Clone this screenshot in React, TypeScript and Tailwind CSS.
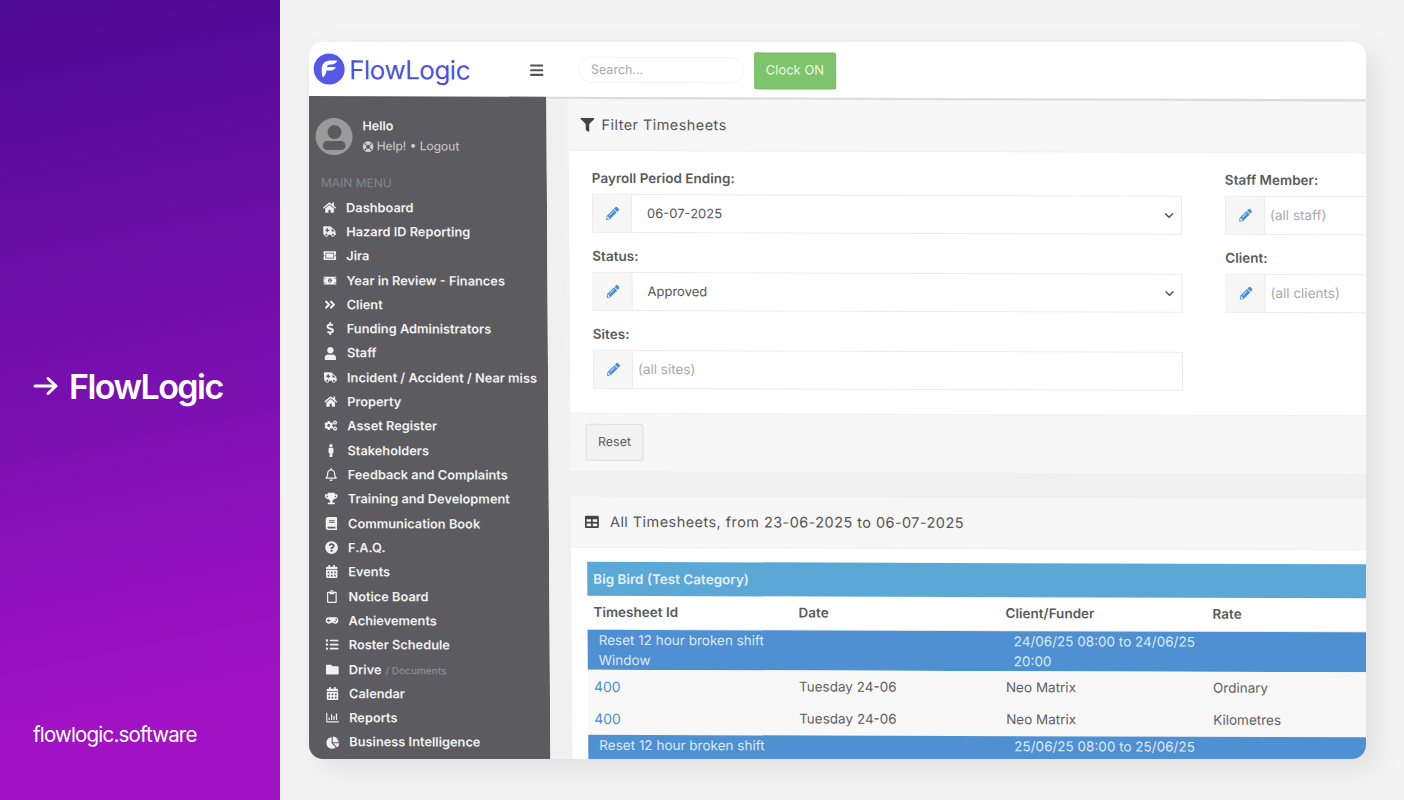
import {
  FaHome, FaAmbulance, FaTicketAlt, FaMoneyBillAlt, FaAngleDoubleRight, FaDollarSign, FaUser, FaCogs, FaMale,
  FaRegBell, FaTrophy, FaBook, FaQuestionCircle, FaCalendarAlt, FaRegClipboard, FaGamepad, FaListUl, FaFolder,
  FaRegChartBar, FaChartPie, FaBars, FaFilter, FaTable, FaPencilAlt, FaLifeRing, FaChevronDown,
} from "react-icons/fa";

const menu = [
  { label: "Dashboard", icon: FaHome },
  { label: "Hazard ID Reporting", icon: FaAmbulance },
  { label: "Jira", icon: FaTicketAlt },
  { label: "Year in Review - Finances", icon: FaMoneyBillAlt },
  { label: "Client", icon: FaAngleDoubleRight },
  { label: "Funding Administrators", icon: FaDollarSign },
  { label: "Staff", icon: FaUser },
  { label: "Incident / Accident / Near miss", icon: FaAmbulance },
  { label: "Property", icon: FaHome },
  { label: "Asset Register", icon: FaCogs },
  { label: "Stakeholders", icon: FaMale },
  { label: "Feedback and Complaints", icon: FaRegBell },
  { label: "Training and Development", icon: FaTrophy },
  { label: "Communication Book", icon: FaBook },
  { label: "F.A.Q.", icon: FaQuestionCircle },
  { label: "Events", icon: FaCalendarAlt },
  { label: "Notice Board", icon: FaRegClipboard },
  { label: "Achievements", icon: FaGamepad },
  { label: "Roster Schedule", icon: FaListUl },
  { label: "Drive", icon: FaFolder, sub: "/ Documents" },
  { label: "Calendar", icon: FaCalendarAlt },
  { label: "Reports", icon: FaRegChartBar },
  { label: "Business Intelligence", icon: FaChartPie },
];

const Field = ({ label, value, placeholder, select, width }: { label: string; value?: string; placeholder?: string; select?: boolean; width: string }) => (
  <div className={`${width} h-[78px]`}>
    <div className="h-[16px] leading-[16px] text-[13.5px] font-semibold text-[#5a5a5a]">{label}</div>
    <div className="mt-[8px] flex h-[39px] border border-[#ececec] bg-white">
      <div className="flex w-[39px] shrink-0 items-center justify-center border-r border-[#ececec] bg-[#f7f7f7]">
        <FaPencilAlt className="text-[13px] text-[#4a90d6]" />
      </div>
      {value ? (
        <div className="pl-[15px] flex items-center text-[13px] text-[#555]">{value}</div>
      ) : (
        <div className="pl-[5px] flex items-center text-[13.5px] text-[#aaa]">{placeholder}</div>
      )}
      {select && (
        <div className="ml-auto flex items-center pr-[3px]">
          <FaChevronDown className="mr-[4px] text-[10px] text-[#555]" />
        </div>
      )}
    </div>
  </div>
);

const BlueRow = ({ id, when, second, whenSecond }: { id: string; when: string; second?: string; whenSecond?: string }) => (
  <div className="grid grid-cols-[415px_1fr] bg-[#4f90d2] pl-[11px] text-[13.5px] leading-[20px] text-[#dbe9f7]">
    <div>
      <div>{id}</div>
      {second && <div>{second}</div>}
    </div>
    <div className="w-[200px]">
      <div className="whitespace-nowrap">{when}</div>
      {whenSecond && <div>{whenSecond}</div>}
    </div>
  </div>
);

const DataRow = ({ rate, h }: { rate: string; h: string }) => (
  <div className={`grid grid-cols-[205px_207px_207px_1fr] items-center pl-[6px] text-[13.5px] text-[#5f5f5f] ${h}`}>
    <div className="text-[14px] text-[#4a8fd0]">400</div>
    <div>Tuesday 24-06</div>
    <div>Neo Matrix</div>
    <div>{rate}</div>
  </div>
);

export default function App() {
  return (
    <div className="flex h-[800px] w-[1404px] overflow-hidden bg-[#f3f3f3] font-['Inter',sans-serif]">
      <aside className="flex w-[280px] shrink-0 flex-col bg-[linear-gradient(168deg,#4d0a94_0%,#7a10b0_50%,#a012c4_85%)] pl-[33px] text-white">
        <div className="mt-[366px] flex h-[40px] items-center">
          <svg width="26" height="20" viewBox="0 0 26 20" fill="none" stroke="white" strokeWidth="3" strokeLinecap="round" strokeLinejoin="round">
            <path d="M2 10h21M15 2.5 23 10l-8 7.500" />
          </svg>
          <span className="ml-[10px] text-[34px] font-semibold tracking-[-0.045em]">FlowLogic</span>
        </div>
        <div className="mt-[316px] text-[20.500px] leading-[26px] tracking-[-0.04em]">flowlogic.software</div>
      </aside>

      <main className="ml-[29px] mt-[42px] h-[717px] w-[1057px] overflow-hidden rounded-[14px] bg-white shadow-[10px_10px_28px_rgba(0,0,0,0.08)]">
        <div className="-ml-[8px] h-[760px] w-[1110px] origin-top-left [transform:matrix(1,0.003,0.0061,1,0,0)]">
          {/* top bar */}
          <header className="flex h-[54px] items-center bg-white pl-[12px]">
            <svg width="32" height="32" viewBox="0 0 32 32" className="shrink-0">
              <circle cx="16" cy="16" r="15.500" fill="#5558e6" />
              <path d="M8.500 17c0-6 3-9.500 9-9.500h6.500c-.5 2.500-2.500 3.800-5.500 3.800h-1.500c-2 0-3 1-3.300 2.700h8.800c-.5 2.300-2.500 3.500-5 3.500h-4.200c-.3 3-1.500 5.500-3.800 7-.6-2-1-4.500-1-7.500z" fill="white" />
            </svg>
            <span className="ml-[4px] text-[26px] tracking-[-0.02em] text-[#4d50e0]">FlowLogic</span>
            <FaBars className="ml-[59px] text-[15px] text-[#555]" />
            <div className="ml-[34px] flex h-[26px] w-[166px] items-center rounded-full border border-[#f4f4f4] pl-[12px] text-[12.500px] text-[#aaa]">Search...</div>
            <div className="ml-[10px] flex h-[37px] w-[82px] items-center justify-center rounded-[2px] border border-[#74bb65] bg-[#7dc46d] text-[13px] text-[#edf7ea]">Clock ON</div>
          </header>

          <div className="flex h-[720px]">
            {/* sidebar */}
            <nav className="w-[245px] shrink-0 bg-[#5c5c60] pl-[12px] pt-[21px] text-[#f1f1f1]">
              <div className="flex items-center pl-[2px]">
                <div className="relative h-[37px] w-[37px] overflow-hidden rounded-full bg-[#9a9a9a]">
                  <div className="absolute left-[11.500px] top-[7px] h-[14px] w-[14px] rounded-full bg-[#5c5c60]" />
                  <div className="absolute left-[7px] top-[23px] h-[9px] w-[23px] rounded-full bg-[#5c5c60]" />
                </div>
                <div className="ml-[10px]">
                  <div className="text-[12.500px] font-semibold leading-[18px]">Hello</div>
                  <div className="mt-[2px] flex items-center text-[12px] leading-[18px] text-[#cfcfcf]">
                    <FaLifeRing className="mr-[3px] text-[11px]" />
                    Help! • Logout
                  </div>
                </div>
              </div>
              <div className="mt-[20px] pl-[7px] text-[12px] leading-[16px] text-[#85858a]">MAIN MENU</div>
              <ul className="mt-[4px] pl-[7px]">
                {menu.map((item) => (
                  <li key={item.label} className="flex h-[24.32px] items-center">
                    <span className="flex w-[16px] shrink-0 justify-center">
                      <item.icon className="text-[13px]" />
                    </span>
                    <span className="ml-[9px] whitespace-nowrap text-[12.800px] font-semibold">{item.label}</span>
                    {item.sub && <span className="ml-[4px] pt-[2px] text-[10px] font-medium text-[#8e8e92]">{item.sub}</span>}
                  </li>
                ))}
              </ul>
            </nav>

            {/* content */}
            <section className="flex-1 border-t-[2px] border-[#dcdcdc] bg-[#f0f0f1] pl-[20px] pt-[1px]">
              <div className="border-l-[2px] border-[#f0f0f1] bg-white">
                <div className="flex h-[51px] items-center border-b border-[#f0f0f0] bg-[#f7f7f7] pl-[12px] text-[14.500px] tracking-[0.03em] text-[#555]">
                  <FaFilter className="mr-[7px] text-[14px] text-[#444]" />
                  Filter Timesheets
                </div>
                <div className="flex h-[262px] pl-[23px] pt-[19px]">
                  <div className="w-[590px]">
                    <Field label="Payroll Period Ending:" value="06-07-2025" select width="w-[590px]" />
                    <Field label="Status:" value="Approved" select width="w-[590px]" />
                    <Field label="Sites:" placeholder="(all sites)" width="w-[590px]" />
                  </div>
                  <div className="ml-[43px] w-[300px]">
                    <Field label="Staff Member:" placeholder="(all staff)" width="w-[300px]" />
                    <Field label="Client:" placeholder="(all clients)" width="w-[300px]" />
                  </div>
                </div>
                <div className="flex h-[58px] items-center border-t border-[#f0f0f0] bg-[#f7f7f7] pl-[15px]">
                  <div className="flex h-[37px] w-[58px] items-center justify-center rounded-[2px] border border-[#e0e0e0] bg-[#f2f2f2] text-[12.500px] text-[#5f5f5f]">Reset</div>
                </div>
              </div>

              <div className="mt-[26px] border-l-[2px] border-[#f0f0f1] bg-white">
                <div className="flex h-[51px] items-center border-b border-[#f0f0f0] bg-[#f7f7f7] pl-[14px] text-[14.500px] tracking-[0.03em] text-[#555]">
                  <FaTable className="mr-[11px] text-[14px] text-[#444]" />
                  All Timesheets, from 23-06-2025 to 06-07-2025
                </div>
                <div className="pl-[16px] pt-[14px]">
                  <div className="flex h-[34px] items-center bg-[#5ba8d6] pl-[6px] text-[13.500px] font-semibold text-[#e3f0f8]">Big Bird (Test Category)</div>
                  <div className="grid h-[34px] grid-cols-[205px_207px_207px_1fr] items-center border-b border-[#eee] pl-[6px] text-[13.500px] font-semibold text-[#5a5a5a]">
                    <div>Timesheet Id</div>
                    <div>Date</div>
                    <div>Client/Funder</div>
                    <div>Rate</div>
                  </div>
                  <BlueRow id="Reset 12 hour broken shift" second="Window" when="24/06/25 08:00 to 24/06/25" whenSecond="20:00" />
                  <div className="bg-[#f8f8f8]">
                    <DataRow rate="Ordinary" h="h-[32px]" />
                    <DataRow rate="Kilometres" h="h-[33px]" />
                  </div>
                  <BlueRow id="Reset 12 hour broken shift" when="25/06/25 08:00 to 25/06/25" whenSecond="20:00" second="Window" />
                </div>
              </div>
            </section>
          </div>
        </div>
      </main>
    </div>
  );
}
